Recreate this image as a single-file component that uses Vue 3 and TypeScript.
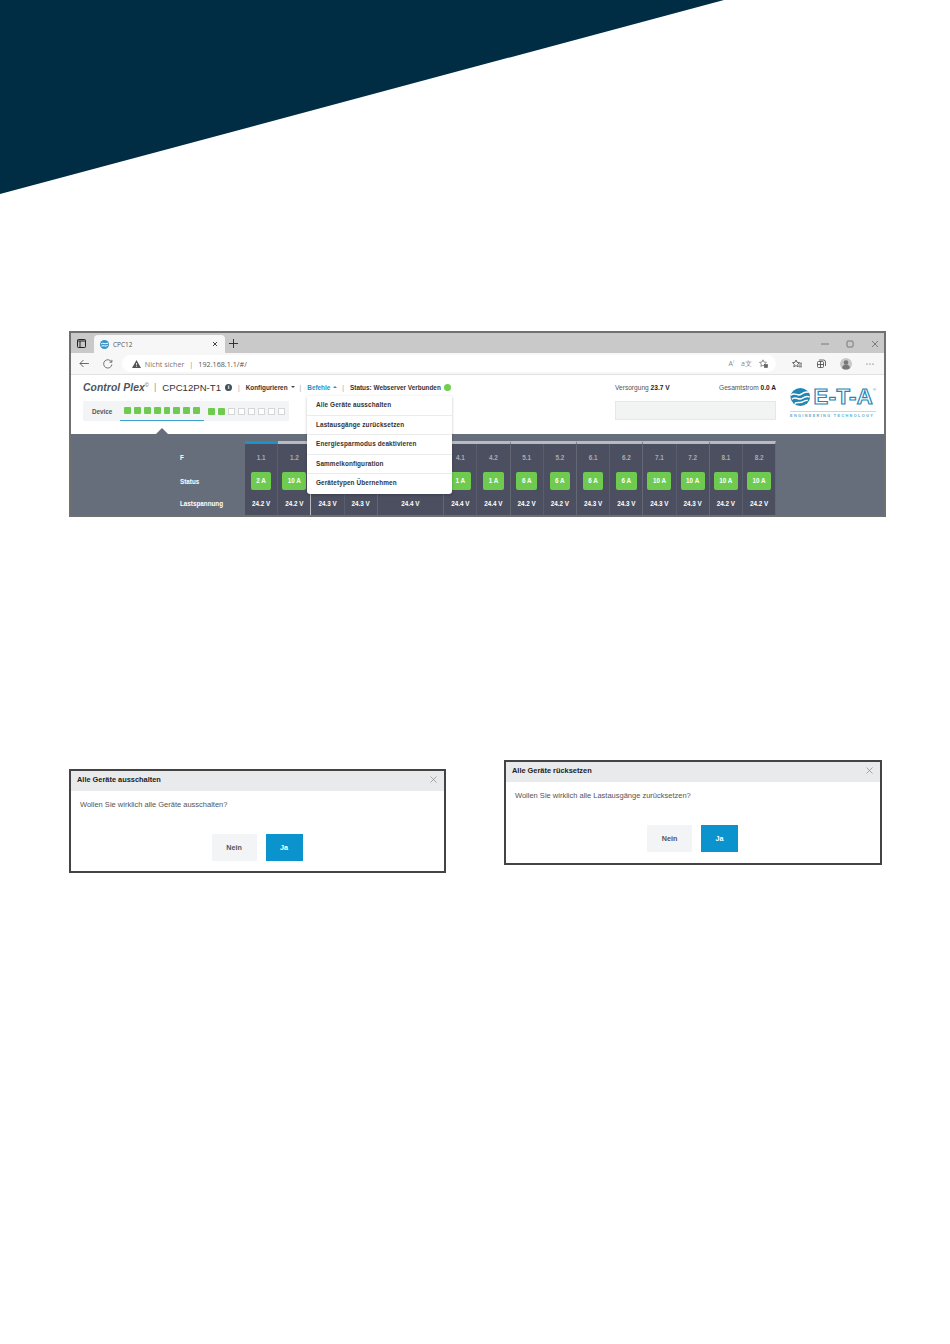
<script setup lang="ts">
interface Channel {
  id?: string
  amps?: string
  volts: string
}

// the ids and chips of groups 2 and 3 sit behind the open menu
const groups: { active?: boolean; channels: Channel[] }[] = [
  { active: true, channels: [{ id: '1.1', amps: '2 A', volts: '24.2 V' }, { id: '1.2', amps: '10 A', volts: '24.2 V' }] },
  { channels: [{ volts: '24.3 V' }, { volts: '24.3 V' }] },
  { channels: [{ volts: '24.4 V' }] },
  { channels: [{ id: '4.1', amps: '1 A', volts: '24.4 V' }, { id: '4.2', amps: '1 A', volts: '24.4 V' }] },
  { channels: [{ id: '5.1', amps: '6 A', volts: '24.2 V' }, { id: '5.2', amps: '6 A', volts: '24.2 V' }] },
  { channels: [{ id: '6.1', amps: '6 A', volts: '24.3 V' }, { id: '6.2', amps: '6 A', volts: '24.3 V' }] },
  { channels: [{ id: '7.1', amps: '10 A', volts: '24.3 V' }, { id: '7.2', amps: '10 A', volts: '24.3 V' }] },
  { channels: [{ id: '8.1', amps: '10 A', volts: '24.2 V' }, { id: '8.2', amps: '10 A', volts: '24.2 V' }] },
]

const menuItems = [
  'Alle Geräte ausschalten',
  'Lastausgänge zurücksetzen',
  'Energiesparmodus deaktivieren',
  'Sammelkonfiguration',
  'Gerätetypen Übernehmen',
]

const dialogs = [
  { title: 'Alle Geräte ausschalten', text: 'Wollen Sie wirklich alle Geräte ausschalten?' },
  { title: 'Alle Geräte rücksetzen', text: 'Wollen Sie wirklich alle Lastausgänge zurücksetzen?' },
]
</script>

<template>
  <div class="page">
    <svg class="banner" width="950" height="194" viewBox="0 0 950 194">
      <polygon points="0,0 724,0 0,194" fill="#002d44" />
    </svg>

    <div class="shot">
      <div class="tabbar">
        <svg class="ico tabs-ico" width="9" height="9" viewBox="0 0 9 9" fill="none" stroke="#222" stroke-width="1">
          <rect x="0.500" y="0.500" width="8" height="8" rx="0.800" />
          <path d="M0.500 2h8M3 2v6.500" />
        </svg>
        <div class="tab">
          <svg width="9" height="9" viewBox="0 0 9 9">
            <circle cx="4.500" cy="4.500" r="4.500" fill="#3d93c6" />
            <path d="M1 4c2-2 4 1 7-1M1.500 6.200c2-1.600 4 1 6.200-.8" stroke="#fff" stroke-width="1" fill="none" />
          </svg>
          <span class="tab-title">CPC12</span>
          <svg class="tab-close" width="6" height="6" viewBox="0 0 6 6" stroke="#333" stroke-width="0.900">
            <path d="M1 1l4 4M5 1L1 5" />
          </svg>
        </div>
        <svg class="new-tab" width="9" height="9" viewBox="0 0 9 9" stroke="#222" stroke-width="0.900">
          <path d="M4.500 0v9M0 4.500h9" />
        </svg>
        <div class="win-controls">
          <svg width="8" height="8" viewBox="0 0 8 8" stroke="#666" stroke-width="0.800"><path d="M0 4h8" /></svg>
          <svg width="8" height="8" viewBox="0 0 8 8" stroke="#666" stroke-width="0.800" fill="none"><rect x="1" y="1" width="6" height="6" rx="0.800" /></svg>
          <svg width="8" height="8" viewBox="0 0 8 8" stroke="#666" stroke-width="0.800"><path d="M1 1l6 6M7 1L1 7" /></svg>
        </div>
      </div>

      <div class="addressbar">
        <svg width="10" height="9" viewBox="0 0 10 9" fill="none" stroke="#444" stroke-width="0.800">
          <path d="M10 4.500H1M4.500 1L1 4.500 4.500 8" />
        </svg>
        <svg width="10" height="10" viewBox="0 0 10 10" fill="none" stroke="#555" stroke-width="0.800">
          <path d="M8.600 3A4.200 4.200 0 1 0 9 5.500M9 .8V3.200H6.600" />
        </svg>
        <div class="omnibox">
          <svg width="9" height="8" viewBox="0 0 9 8"><path d="M4.500 0L9 8H0z" fill="#555" /><path d="M4.500 3v2.400M4.500 6v.8" stroke="#fff" stroke-width="0.800" /></svg>
          <span class="insecure">Nicht sicher</span>
          <span class="omni-sep">|</span>
          <span class="url">192.168.1.1/#/</span>
          <span class="omni-icons">
            <span class="aa">A<sup>)</sup></span>
            <span class="aa">a文</span>
            <svg width="9" height="9" viewBox="0 0 9 9" fill="none" stroke="#666" stroke-width="0.700">
              <path d="M4 .8l1 2.200 2.400.3L5.700 5l.4 2.400L4 6.300 1.900 7.400 2.300 5 .6 3.300 3 3z" />
              <rect x="5.500" y="5.500" width="3" height="3" fill="#666" />
            </svg>
          </span>
        </div>
        <div class="tools">
          <svg width="10" height="10" viewBox="0 0 10 10" fill="none" stroke="#444" stroke-width="0.800">
            <path d="M4 1l1 2.300 2.500.3L5.700 5.300l.5 2.500L4 6.600 1.800 7.800l.5-2.500L.5 3.600 3 3.300z" />
            <path d="M7 6h3M7 7.800h3M7.500 4.200H10" />
          </svg>
          <svg width="10" height="10" viewBox="0 0 10 10" fill="none" stroke="#444" stroke-width="0.800">
            <rect x="1.500" y="2.500" width="6" height="6" rx="1" />
            <path d="M3 1h4.500a2 2 0 0 1 2 2v4M1.500 5.500h6M4.500 2.500v6" />
          </svg>
          <svg width="12" height="12" viewBox="0 0 12 12">
            <circle cx="6" cy="6" r="6" fill="#c9c9c9" />
            <circle cx="6" cy="4.500" r="2.300" fill="#777" />
            <path d="M2 10c.6-2.600 2.300-3.400 4-3.400s3.400.8 4 3.400a6 6 0 0 1-8 0z" fill="#777" />
          </svg>
          <svg width="8" height="2" viewBox="0 0 8 2" fill="#444">
            <circle cx="1" cy="1" r="0.600" /><circle cx="4" cy="1" r="0.600" /><circle cx="7" cy="1" r="0.600" />
          </svg>
        </div>
      </div>

      <div class="app-header">
        <div class="header-left">
          <div class="nav">
            <span class="brand">Control Plex<sup>©</sup></span>
            <span class="sep big">|</span>
            <span class="device-name">CPC12PN-T1</span>
            <span class="info">i</span>
            <span class="sep">|</span>
            <span class="nav-item">Konfigurieren</span>
            <span class="caret down"></span>
            <span class="sep">|</span>
            <span class="nav-item blue">Befehle</span>
            <span class="caret up"></span>
            <span class="sep">|</span>
            <span class="nav-item">Status: Webserver Verbunden</span>
            <span class="status-dot"></span>
          </div>
          <div class="device-strip">
            <span class="device-label">Device</span>
            <div class="device-set selected">
              <span v-for="n in 8" :key="n" class="slot on"></span>
            </div>
            <div class="device-set">
              <span v-for="n in 2" :key="n" class="slot on"></span>
              <span v-for="n in 6" :key="n" class="slot"></span>
            </div>
          </div>
        </div>
        <div class="header-right">
          <div class="readings">
            <span>Versorgung <b>23.7 V</b></span>
            <span>Gesamtstrom <b>0.0 A</b></span>
          </div>
          <div class="message-box"></div>
        </div>
        <div class="logo">
          <div class="logo-top">
            <svg width="22" height="20" viewBox="0 0 22 20">
              <ellipse cx="11" cy="10" rx="10.500" ry="9.500" fill="#1f86b5" />
              <path d="M1 8c4-4 7 2 11-1 3-2 5-3 8-2M2 12.500c4-4 7 1.500 11-1 3-2 5-2.500 8-1.500M5 17c3-2.500 6 0 9-2 2-1.300 3-1.500 5-1.500" stroke="#fff" stroke-width="1.600" fill="none" />
            </svg>
            <span class="eta">E-T-A</span>
            <sup class="reg">®</sup>
          </div>
          <div class="tagline">ENGINEERING TECHNOLOGY</div>
        </div>
      </div>

      <div class="panel">
        <span class="notch"></span>
        <div class="row-labels">
          <div class="row-id">F</div>
          <div class="row-chip">Status</div>
          <div class="row-volt">Lastspannung</div>
        </div>
        <div v-for="(group, i) in groups" :key="i" class="group" :class="{ active: group.active }">
          <div v-for="(ch, j) in group.channels" :key="j" class="channel">
            <div class="row-id">{{ ch.id }}</div>
            <div class="row-chip"><span v-if="ch.amps" class="chip">{{ ch.amps }}</span></div>
            <div class="row-volt">{{ ch.volts }}</div>
          </div>
        </div>
      </div>

      <ul class="menu">
        <li v-for="item in menuItems" :key="item">{{ item }}</li>
      </ul>
    </div>

    <div class="dialogs">
      <div v-for="dialog in dialogs" :key="dialog.title" class="dialog">
        <div class="dialog-head">
          <span>{{ dialog.title }}</span>
          <svg width="7" height="7" viewBox="0 0 7 7" stroke="#888" stroke-width="0.700"><path d="M.5.5l6 6M6.500.5l-6 6" /></svg>
        </div>
        <p class="dialog-text">{{ dialog.text }}</p>
        <div class="dialog-actions">
          <button class="btn no">Nein</button>
          <button class="btn yes">Ja</button>
        </div>
      </div>
    </div>
  </div>
</template>

<style scoped>
.page {
  width: 950px;
  height: 1344px;
  background: #fff;
  overflow: hidden;
  font-family: "Liberation Sans", Arial, sans-serif;
}

.banner {
  display: block;
}

.shot {
  position: relative;
  box-sizing: border-box;
  width: 817px;
  height: 186px;
  margin: 137px 0 0 69px;
  border: 2px solid #707070;
  background: #fff;
  overflow: hidden;
}

.tabbar {
  display: flex;
  align-items: flex-end;
  height: 20px;
  background: #c9c9c9;
}
.tabs-ico {
  margin: 0 0 5px 6px;
}
.tab {
  display: flex;
  align-items: center;
  gap: 5px;
  box-sizing: border-box;
  width: 131px;
  height: 18px;
  margin-left: 8px;
  padding: 0 6px;
  background: #f7f7f7;
  border-radius: 4px 4px 0 0;
}
.tab-title {
  font-family: "Open Sans", sans-serif;
  font-size: 6.500px;
  color: #555;
  margin-left: -1px;
}
.tab-close {
  margin-left: auto;
  margin-right: 1px;
}
.new-tab {
  margin: 0 0 5px 4px;
}
.win-controls {
  display: flex;
  gap: 17px;
  margin: 0 5px 5px auto;
}

.addressbar {
  display: flex;
  align-items: center;
  gap: 14px;
  box-sizing: border-box;
  height: 22px;
  padding: 0 10px 0 8px;
  background: #f7f7f7;
  border-bottom: 1px solid #e2e2e2;
}
.omnibox {
  display: flex;
  align-items: center;
  box-sizing: border-box;
  width: 661px;
  height: 17px;
  margin-left: -5px;
  padding: 0 10px;
  background: #fff;
  border-radius: 9px;
  font-family: "Open Sans", sans-serif;
  font-size: 7.200px;
  color: #777;
}
.insecure {
  margin-left: 4px;
}
.omni-sep {
  margin: 0 5px;
  color: #888;
}
.url {
  color: #555;
}
.omni-icons {
  display: flex;
  align-items: center;
  gap: 7px;
  margin-left: auto;
  margin-right: -2px;
}
.aa {
  font-size: 7px;
  color: #888;
}
.aa sup {
  font-size: 4px;
}
.tools {
  display: flex;
  align-items: center;
  gap: 14px;
  margin-left: 2px;
}

.app-header {
  display: flex;
  height: 59px;
  background: #fff;
}
.header-left {
  width: 544px;
  padding: 6px 0 0 12px;
  box-sizing: border-box;
}
.nav {
  display: flex;
  align-items: center;
  height: 12px;
  font-size: 6.400px;
  color: #333;
}
.brand {
  font-size: 10.300px;
  font-weight: 700;
  font-style: italic;
  color: #4a5560;
  letter-spacing: 0.100px;
}
.brand sup {
  font-size: 5.500px;
  font-weight: 400;
  font-style: normal;
  vertical-align: 4px;
  line-height: 0;
}
.sep {
  margin: 0 6px;
  color: #999;
}
.sep.big {
  margin: 0 6px 0 5px;
  font-size: 9px;
}
.device-name {
  font-size: 9.600px;
  color: #333;
}
.info {
  display: flex;
  align-items: center;
  justify-content: center;
  width: 7px;
  height: 7px;
  margin-left: 4px;
  border-radius: 50%;
  background: #444f5a;
  color: #fff;
  font-size: 6px;
  font-weight: 700;
}
.nav-item {
  font-weight: 700;
}
.nav-item.blue {
  color: #1a93c8;
}
.caret {
  width: 0;
  height: 0;
  margin-left: 3px;
  margin-right: -1px;
  border-left: 2.500px solid transparent;
  border-right: 2.500px solid transparent;
}
.caret.down {
  border-top: 2px solid #444;
}
.caret.up {
  border-bottom: 2px solid #1a93c8;
}
.status-dot {
  width: 7px;
  height: 7px;
  margin-left: 3px;
  border-radius: 50%;
  background: #6fcf4e;
}
.device-strip {
  display: flex;
  align-items: center;
  width: 206px;
  height: 20px;
  margin-top: 8px;
  background: #f3f4f6;
}
.device-label {
  width: 37px;
  padding-left: 9px;
  box-sizing: border-box;
  font-size: 6.300px;
  font-weight: 700;
  color: #555;
}
.device-set {
  display: flex;
  align-items: center;
  gap: 3px;
  box-sizing: border-box;
  height: 20px;
  padding: 0 4px;
}
.device-set.selected {
  width: 84px;
  border-bottom: 1px solid #3aa0cc;
}
.slot {
  box-sizing: border-box;
  width: 7px;
  height: 7px;
  border: 1px solid #d4d6d8;
  background: #fff;
}
.slot.on {
  border: 0;
  background: #6fcb50;
  border-radius: 1px;
}

.header-right {
  width: 161px;
  padding-top: 9px;
}
.readings {
  display: flex;
  justify-content: space-between;
  height: 10px;
  font-size: 6.600px;
  color: #555;
}
.readings b {
  color: #222;
}
.message-box {
  box-sizing: border-box;
  height: 19px;
  margin-top: 7px;
  background: #f2f3f3;
  border: 1px solid #e6e7e7;
}

.logo {
  width: 86px;
  margin-left: 14px;
  padding-top: 12px;
}
.logo-top {
  display: flex;
  align-items: center;
  height: 20px;
}
.eta {
  margin-left: 3px;
  font-size: 22px;
  line-height: 20px;
  font-weight: 700;
  color: #fff;
  letter-spacing: 0.400px;
  white-space: nowrap;
  -webkit-text-stroke: 1.200px #1f86b5;
}
.reg {
  font-size: 4px;
  line-height: 6px;
  color: #1f86b5;
  align-self: flex-start;
}
.tagline {
  margin-top: 4px;
  padding-top: 2px;
  border-top: 1px solid #bcdcea;
  font-size: 3.800px;
  font-weight: 700;
  color: #5aaccf;
  letter-spacing: 1.350px;
  white-space: nowrap;
}

.panel {
  position: relative;
  display: flex;
  box-sizing: border-box;
  height: 81px;
  padding-top: 7px;
  background: #666e7b;
  font-size: 6.300px;
  font-weight: 700;
  color: #fff;
}
.notch {
  position: absolute;
  left: 85px;
  top: -6px;
  width: 0;
  height: 0;
  border-left: 6px solid transparent;
  border-right: 6px solid transparent;
  border-bottom: 6px solid #666e7b;
}
.row-labels {
  width: 174px;
  padding: 3px 0 0 109px;
  box-sizing: border-box;
}
.row-id {
  display: flex;
  align-items: center;
  height: 26px;
}
.row-chip {
  display: flex;
  align-items: center;
  height: 22px;
}
.row-volt {
  display: flex;
  align-items: center;
  height: 23px;
}
.group {
  display: flex;
  box-sizing: border-box;
  width: 66.400px;
  border-top: 3px solid #b8bbc0;
  border-right: 1px solid #646875;
}
.group.active {
  border-image: linear-gradient(90deg, #1a93c8 50%, #b8bbc0 50%) 1;
}
.channel {
  flex: 1;
  background: #4c4f60;
  text-align: center;
}
.channel + .channel {
  border-left: 1px solid #5a5d6c;
}
.channel .row-id,
.channel .row-chip,
.channel .row-volt {
  justify-content: center;
}
.channel .row-id {
  color: #a9acb4;
}
.chip {
  box-sizing: border-box;
  padding: 0 5.500px;
  min-width: 20px;
  height: 18px;
  line-height: 18px;
  background: #6fcb50;
  border-radius: 2px;
}

.menu {
  position: absolute;
  left: 236px;
  top: 63px;
  width: 145px;
  margin: 0;
  padding: 0;
  list-style: none;
  background: #fff;
  border-radius: 0 0 3px 3px;
  box-shadow: 0 1px 3px rgba(0, 0, 0, 0.25);
}
.menu li {
  box-sizing: border-box;
  height: 19.500px;
  padding-left: 9px;
  line-height: 18px;
  font-size: 6.400px;
  font-weight: 700;
  letter-spacing: 0.120px;
  color: #333;
  border-bottom: 1px solid #ececec;
}
.menu li:last-child {
  border-bottom: 0;
}

.dialogs {
  display: flex;
  align-items: flex-start;
  gap: 58px;
  margin: 243px 0 0 69px;
}
.dialog {
  box-sizing: border-box;
  width: 377px;
  height: 104px;
  margin-top: 9px;
  border: 2px solid #444;
  background: #fff;
}
.dialog:last-child {
  width: 378px;
  height: 105px;
  margin-top: 0;
}
.dialog-head {
  display: flex;
  align-items: center;
  justify-content: space-between;
  box-sizing: border-box;
  height: 20px;
  padding: 0 7px 4px 6px;
  background: #e9eaec;
  font-size: 7.400px;
  font-weight: 700;
  color: #222;
}
.dialog-text {
  margin: 9px 0 0 9px;
  font-size: 7.500px;
  line-height: 10px;
  color: #555;
}
.dialog-actions {
  display: flex;
  justify-content: center;
  gap: 9px;
  margin-top: 24px;
  margin-left: -1px;
}
.btn {
  height: 27px;
  padding: 0;
  border: 0;
  font-family: inherit;
  font-size: 7.200px;
  font-weight: 700;
}
.btn.no {
  width: 45px;
  background: #f3f4f5;
  color: #555;
}
.btn.yes {
  width: 37px;
  background: #0a93cc;
  color: #fff;
}
</style>
